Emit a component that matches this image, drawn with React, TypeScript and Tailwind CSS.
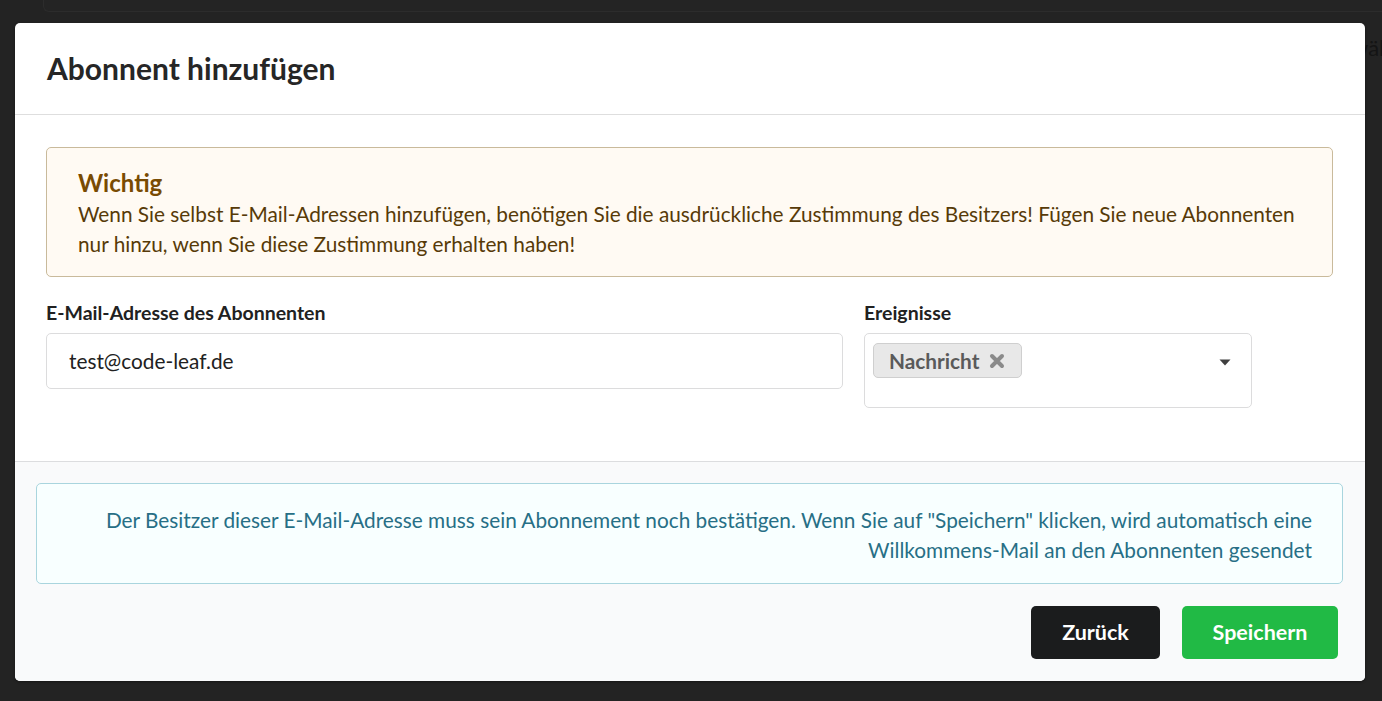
import React from "react";

export default function App() {
  return (
    <div
      className="relative h-[701px] w-[1382px] overflow-hidden bg-[#232323]"
      style={{ fontFamily: "Lato, 'Open Sans', sans-serif" }}
    >
      {/* page behind the dimmer */}
      <div className="ml-[43px] h-[12px] rounded-bl-[6px] border-b border-l border-[#2c2c2c] bg-[#242424]" />
      <div className="absolute left-[1351px] top-[31px] whitespace-nowrap text-[22px] text-[#141414]">wäl</div>

      {/* modal */}
      <div className="absolute left-[15px] top-[23px] w-[1350px] overflow-hidden rounded-[5px] bg-white shadow-[0_1px_3px_rgba(0,0,0,0.4)]">
        <div className="flex h-[92px] items-center border-b border-[#dedede] px-[32px]">
          <h1 className="text-[30px] font-bold text-[#262626]">Abonnent hinzufügen</h1>
        </div>

        <div className="pb-[53px] pl-[31px] pr-[32px] pt-[32px]">
          <div className="rounded-[5px] border border-[#c9ba9b] bg-[#fffaf3] pb-[17px] pl-[31px] pr-[30px] pt-[19px] text-[#573a08]">
            <div className="text-[24px] font-bold leading-[32px] text-[#794b02]">Wichtig</div>
            <p className="whitespace-nowrap text-[20.8px] leading-[30px]">
              Wenn Sie selbst E-Mail-Adressen hinzufügen, benötigen Sie die ausdrückliche Zustimmung des Besitzers! Fügen Sie neue Abonnenten
              <br />
              nur hinzu, wenn Sie diese Zustimmung erhalten haben!
            </p>
          </div>

          <div className="mt-[24px] flex gap-[21px]">
            <div className="w-[797px]">
              <label className="block text-[19.5px] font-bold leading-[24px] text-[#212121]">
                E-Mail-Adresse des Abonnenten
              </label>
              <div className="mt-[8px] flex h-[56px] items-center rounded-[5px] border border-[#dcdcdd] px-[22px] text-[20.8px] text-[#212121]">
                test@code-leaf.de
              </div>
            </div>
            <div className="w-[388px]">
              <label className="block text-[19.5px] font-bold leading-[24px] text-[#212121]">Ereignisse</label>
              <div className="relative mt-[8px] h-[75px] rounded-[5px] border border-[#dcdcdd] pl-[8px] pt-[9px]">
                <span className="inline-flex h-[35px] items-center gap-[10px] rounded-[5px] border border-[#cfcfcf] bg-[#e8e8e8] pl-[15px] pr-[16px] text-[20.8px] font-bold text-[#5a5a5a]">
                  Nachricht
                  <svg width="16" height="16" viewBox="0 0 16 16" className="mt-[1px]">
                    <path d="M3 3 L13 13 M13 3 L3 13" stroke="#8a8a8a" strokeWidth="4" strokeLinecap="round" />
                  </svg>
                </span>
                <svg width="12" height="7" viewBox="0 0 12 7" className="absolute left-[354px] top-[25px]">
                  <path d="M0.5 0.5 L11.5 0.5 L6 6.5 Z" fill="#3f3f3f" />
                </svg>
              </div>
            </div>
          </div>
        </div>

        <div className="border-t border-[#dcdddf] bg-[#f9fafb] pb-[22px] pl-[21px] pr-[22px] pt-[21px]">
          <div className="whitespace-nowrap rounded-[5px] border border-[#a9d5de] bg-[#f8ffff] pb-[18px] pl-[30px] pr-[30px] pt-[21px] text-right text-[20.8px] leading-[30px] text-[#276f86]">
            Der Besitzer dieser E-Mail-Adresse muss sein Abonnement noch bestätigen. Wenn Sie auf "Speichern" klicken, wird automatisch eine
            <br />
            Willkommens-Mail an den Abonnenten gesendet
          </div>
          <div className="mt-[22px] flex justify-end gap-[22px] pr-[5px]">
            <button className="h-[53px] w-[129px] rounded-[5px] bg-[#1b1c1d] text-[21.5px] font-bold text-white">Zurück</button>
            <button className="h-[53px] w-[156px] rounded-[5px] bg-[#21ba45] text-[21.5px] font-bold text-white">Speichern</button>
          </div>
        </div>
      </div>
    </div>
  );
}
